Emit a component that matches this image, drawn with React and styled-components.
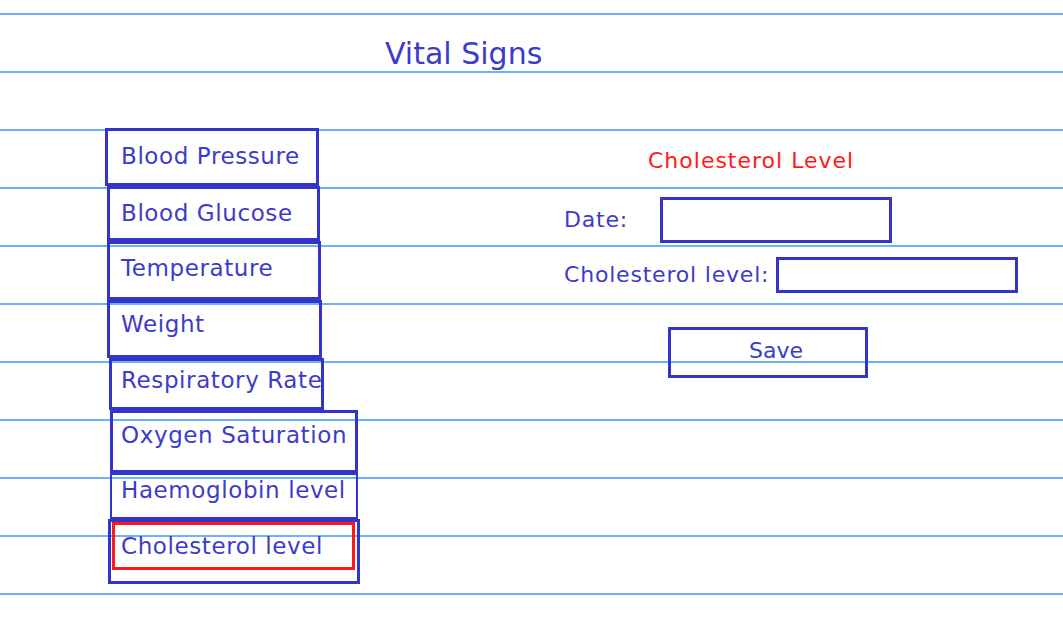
import styled, { createGlobalStyle } from "styled-components";

const BLUE = "#3434cc";
const TEXT = "#3c3cc8";
const RED = "#ff1a1a";

const GlobalStyle = createGlobalStyle`
  html, body {
    margin: 0;
    padding: 0;
  }
  body {
    min-height: 641px;
    font-family: "DejaVu Sans", "Liberation Sans", sans-serif;
    color: ${TEXT};
    background-color: #fff;
    background-image: repeating-linear-gradient(
      to bottom,
      transparent 0px,
      transparent 13px,
      #6cb0ff 13px,
      #6cb0ff 15px,
      transparent 15px,
      transparent 58px
    );
  }
`;

const vitals = [
  { name: "Blood Pressure", x: 0, w: 214, h: 58, b: 3, pt: 12 },
  { name: "Blood Glucose", x: 2, w: 213, h: 55, b: 3, pt: 11 },
  { name: "Temperature", x: 2, w: 214, h: 59, b: 3, pt: 11 },
  { name: "Weight", x: 2, w: 215, h: 58, b: 3, pt: 8 },
  { name: "Respiratory Rate", x: 4, w: 215, h: 52, b: 3, pt: 6 },
  { name: "Oxygen Saturation", x: 5, w: 248, h: 63, b: 3, pt: 9 },
  { name: "Haemoglobin level", x: 5, w: 248, h: 46, b: 2, pt: 2 },
];

const App = () => {
  return (
    <Page>
      <GlobalStyle />
      <Title>Vital Signs</Title>
      <Main>
        <VitalList>
          {vitals.map((v) => (
            <VitalItem key={v.name} $x={v.x} $w={v.w} $h={v.h} $b={v.b} $pt={v.pt}>
              {v.name}
            </VitalItem>
          ))}
          <ActiveOuter>
            <ActiveItem>Cholesterol level</ActiveItem>
          </ActiveOuter>
        </VitalList>

        <FormPanel>
          <FormTitle>Cholesterol Level</FormTitle>
          <DateRow>
            <Label $w={96}>Date:</Label>
            <DateInput />
          </DateRow>
          <LevelRow>
            <Label>Cholesterol level:</Label>
            <LevelInput />
          </LevelRow>
          <SaveButton>Save</SaveButton>
        </FormPanel>
      </Main>
    </Page>
  );
};

const Page = styled.div`
  padding-top: 36px;
`;

const Title = styled.div`
  margin-left: 385px;
  font-size: 30px;
  line-height: 35px;
  color: ${TEXT};
`;

const Main = styled.div`
  display: flex;
  margin-top: 57px;
  padding-left: 105px;
`;

const VitalList = styled.div`
  display: flex;
  flex-direction: column;
  align-items: flex-start;
  width: 255px;
  flex-shrink: 0;
`;

const VitalItem = styled.div`
  box-sizing: border-box;
  margin-left: ${(p) => p.$x}px;
  width: ${(p) => p.$w}px;
  height: ${(p) => p.$h}px;
  border: ${(p) => p.$b}px solid ${BLUE};
  padding-top: ${(p) => p.$pt}px;
  padding-left: ${(p) => 16 - p.$x - p.$b}px;
  font-size: 23px;
  line-height: 27px;
  letter-spacing: 0.6px;
  white-space: nowrap;
`;

const ActiveOuter = styled.div`
  box-sizing: border-box;
  margin-left: 3px;
  width: 252px;
  height: 65px;
  border: 3px solid ${BLUE};
  padding: 0 2px 0 1px;
`;

const ActiveItem = styled.div`
  box-sizing: border-box;
  height: 48px;
  border: 3px solid ${RED};
  padding-top: 8px;
  padding-left: 6px;
  font-size: 23px;
  line-height: 27px;
  letter-spacing: 0.6px;
  white-space: nowrap;
`;

const FormPanel = styled.div`
  display: flex;
  flex-direction: column;
  align-items: flex-start;
  margin-left: 204px;
  padding-top: 20px;
  font-size: 22px;
`;

const FormTitle = styled.div`
  margin-left: 84px;
  color: ${RED};
  letter-spacing: 1px;
  line-height: 26px;
`;

const Row = styled.div`
  display: flex;
  align-items: center;
`;

const DateRow = styled(Row)`
  margin-top: 23px;
`;

const LevelRow = styled(Row)`
  margin-top: 14px;
  gap: 7px;
`;

const Label = styled.span`
  width: ${(p) => (p.$w ? `${p.$w}px` : "auto")};
  line-height: 26px;
  letter-spacing: 0.8px;
  white-space: nowrap;
`;

const Box = styled.div`
  box-sizing: border-box;
  border: 3px solid ${BLUE};
  background: #fff;
`;

const DateInput = styled(Box)`
  width: 232px;
  height: 46px;
`;

const LevelInput = styled(Box)`
  width: 242px;
  height: 36px;
`;

const SaveButton = styled.div`
  box-sizing: border-box;
  margin-top: 34px;
  margin-left: 104px;
  width: 200px;
  height: 51px;
  border: 3px solid ${BLUE};
  display: flex;
  align-items: center;
  justify-content: center;
  padding-left: 16px;
  padding-bottom: 4px;
  font-size: 22px;
  color: ${TEXT};
`;

export default App;
